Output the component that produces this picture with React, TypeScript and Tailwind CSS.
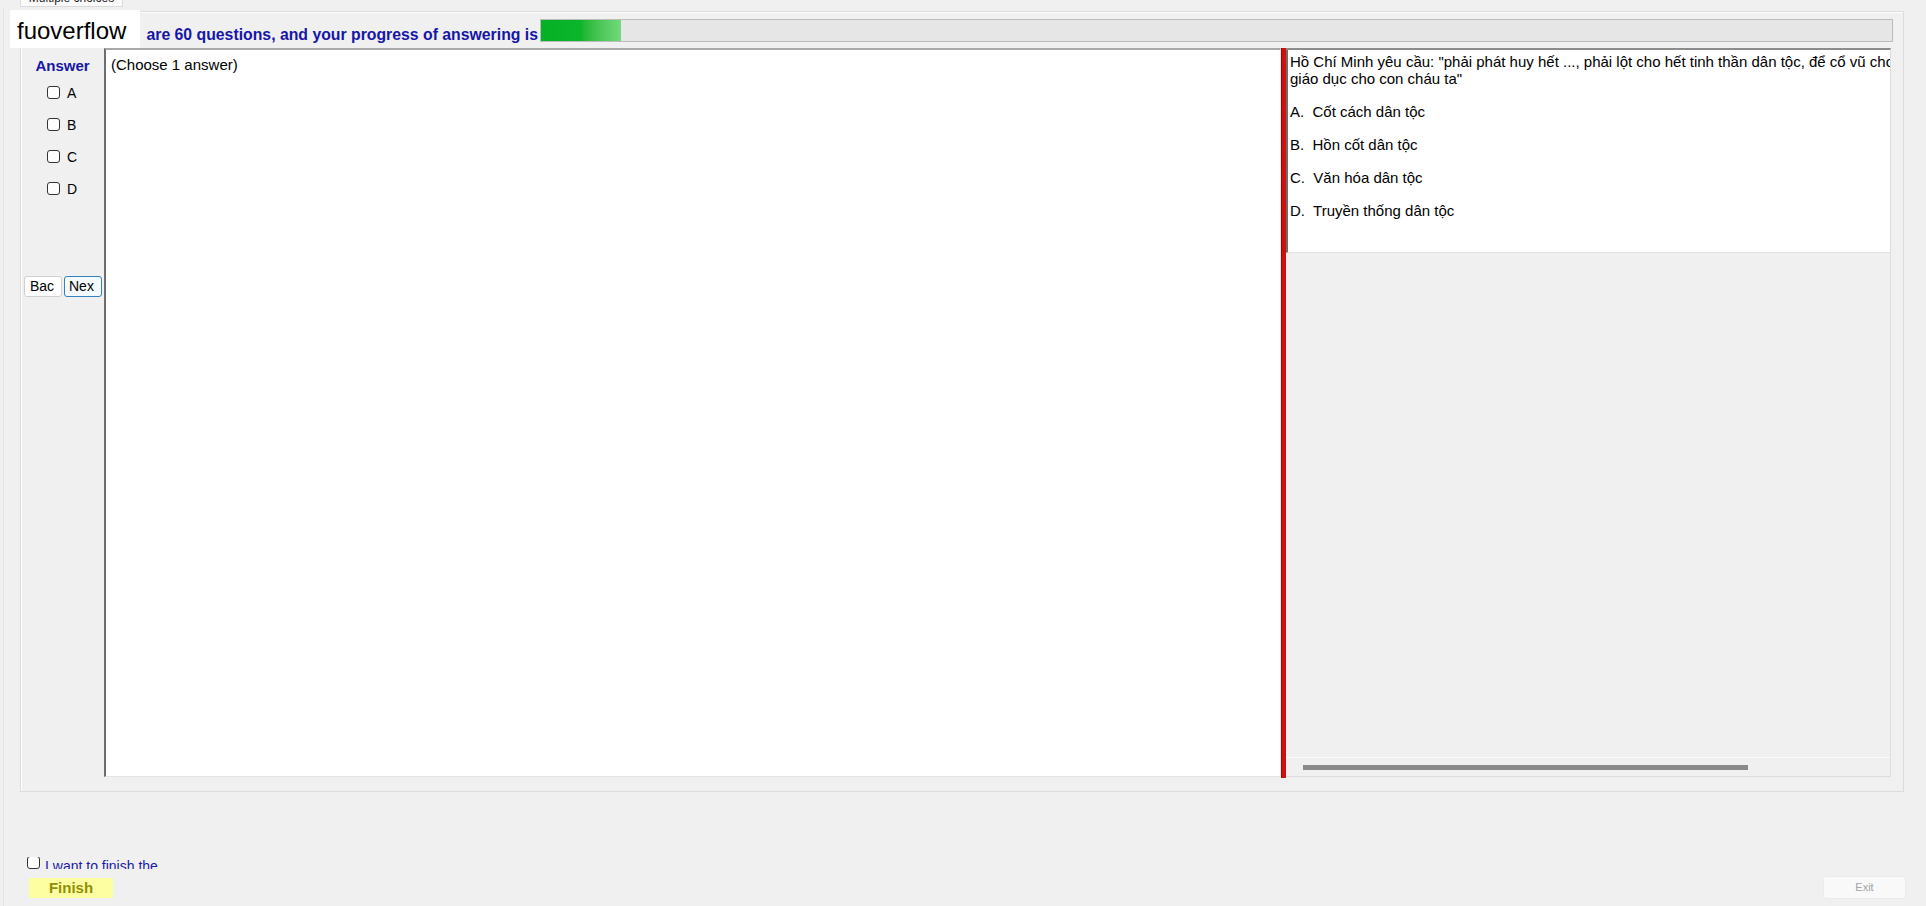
import React from "react";

const options = [
  { key: "A", text: "Cốt cách dân tộc" },
  { key: "B", text: "Hồn cốt dân tộc" },
  { key: "C", text: "Văn hóa dân tộc" },
  { key: "D", text: "Truyền thống dân tộc" },
];

function Box({ className = "" }: { className?: string }) {
  return (
    <span
      className={`block w-[13px] h-[13px] shrink-0 bg-white border border-[#333] rounded-[3px] ${className}`}
    />
  );
}

export default function App() {
  return (
    <div className="relative w-[1926px] h-[906px] overflow-hidden bg-[#f0f0f0] font-['Liberation_Sans',Arial,sans-serif] text-black">
      {/* Tab header, mostly scrolled off the top */}
      <div className="h-[7px] pl-[20px] flex">
        <div className="w-[103px] h-[7px] bg-[#fbfbfb] border-x border-b border-[#dadada] overflow-hidden flex justify-center">
          <span className="text-[12px] leading-[12px] -mt-[8px] text-[#222]">Multiple choices</span>
        </div>
      </div>

      {/* Tab page */}
      <div className="ml-[3px] h-[899px] border-l border-[#e4e4e4] flex flex-col">
        {/* Group box */}
        <div className="ml-[16px] mt-[4px] w-[1884px] h-[781px] border border-[#dcdcdc] shadow-[inset_1px_1px_0_#ffffff] flex flex-col">
          {/* Header: count + progress */}
          <div className="flex items-center h-[23px] mt-[7px]">
            <div className="w-[517px] text-right whitespace-nowrap text-[15.8px] font-bold text-[#1616a8] leading-[23px] pt-[8px]">
              <span className="pr-[5px]">There</span> are 60 questions, and your progress of answering is
            </div>
            <div className="ml-[2px] w-[1353px] h-[23px] border border-[#bcbcbc] bg-[#e6e6e6] flex">
              <div className="w-[80px] h-full bg-gradient-to-r from-[#06b025] via-[#0cb62c] to-[#72d97c]" />
            </div>
          </div>

          {/* Main row */}
          <div className="flex mt-[6px] h-[729px]">
            {/* Answer column */}
            <div className="w-[83px] flex flex-col">
              <div className="text-center text-[15px] font-bold text-[#1616a8] mt-[9px] leading-[17px]">Answer</div>
              <div className="flex flex-col gap-[19px] mt-[12px] pl-[26px]">
                {options.map((o) => (
                  <div key={o.key} className="flex items-center gap-[7px] h-[13px]">
                    <Box />
                    <span className="text-[14px] leading-[14px]">{o.key}</span>
                  </div>
                ))}
              </div>
              <div className="flex gap-[2px] mt-[81px] pl-[3px]">
                <button className="w-[38px] h-[21px] bg-white border border-[#d0d0d0] rounded-[3px] text-[14px] leading-[19px] text-left pl-[5px]">
                  Bac
                </button>
                <button className="w-[38px] h-[21px] bg-[#f4f9fd] border border-[#3580be] rounded-[3px] text-[14px] leading-[19px] text-left pl-[4px]">
                  Nex
                </button>
              </div>
            </div>

            {/* Question body */}
            <div className="w-[1177px] h-full bg-white border-l-2 border-t-2 border-l-[#6e6e6e] border-t-[#a8a8a8] border-r border-b border-r-[#e6e6e6] border-b-[#e3e3e3] pl-[5px] pt-[3px]">
              <span className="text-[15px] leading-[16px]">(Choose 1 answer)</span>
            </div>

            {/* Divider */}
            <div className="w-[5px] h-[730px] bg-[#d20f0f] border-l border-[#8a1010]" />

            {/* Question text panel */}
            <div className="w-[605px] h-full flex flex-col border-t-2 border-[#8c8c8c] border-r border-r-[#dedede]">
              <div className="h-[203px] bg-white border-l-2 border-[#6e6e6e] border-b border-b-[#e2e2e2] pl-[2px] pt-[4px] overflow-hidden text-[15px] leading-[16.5px] whitespace-nowrap">
                <div>Hồ Chí Minh yêu cầu: "phải phát huy hết ..., phải lột cho hết tinh thần dân tộc, để cổ vũ cho đồng bào,</div>
                <div>giáo dục cho con cháu ta"</div>
                <div className="h-[16.5px]" />
                {options.map((o, i) => (
                  <React.Fragment key={o.key}>
                    <div className="whitespace-pre">{`${o.key}.  ${o.text}`}</div>
                    {i < options.length - 1 && <div className="h-[16.5px]" />}
                  </React.Fragment>
                ))}
              </div>
              <div className="flex-1 bg-[#f0f0f0]" />
              <div className="h-[20px] border-t border-[#fafafa] border-b border-b-[#dcdcdc] flex items-center pl-[17px]">
                <div className="w-[445px] h-[5px] bg-[#8a8a8a]" />
              </div>
            </div>
          </div>
        </div>

        {/* Footer */}
        <div className="mt-auto flex items-end justify-between pb-[8px] pr-[20px]">
          <div className="flex flex-col pl-[23px]">
            <div className="flex items-start gap-[5px] h-[12px] overflow-hidden">
              <Box className="mt-[-1px]" />
              <span className="text-[14px] leading-[16px] text-[#1a1aa6] mt-[1px]">I want to finish the</span>
            </div>
            <button className="mt-[9px] ml-[2px] w-[84px] h-[20px] bg-[#fdfda2] text-[15px] font-bold text-[#8f8f06] leading-[20px]">
              Finish
            </button>
          </div>
          <button className="w-[83px] h-[23px] mb-[-1px] bg-[#f9f9f9] border border-[#ebebeb] rounded-[3px] text-[11px] text-[#a3a3a3]">
            Exit
          </button>
        </div>
      </div>

      {/* Watermark label */}
      <div className="absolute left-[10px] top-[10px] w-[130px] h-[38px] bg-white pl-[7px] pt-[3px] text-[24px] leading-[35px] text-black">
        fuoverflow
      </div>
    </div>
  );
}
